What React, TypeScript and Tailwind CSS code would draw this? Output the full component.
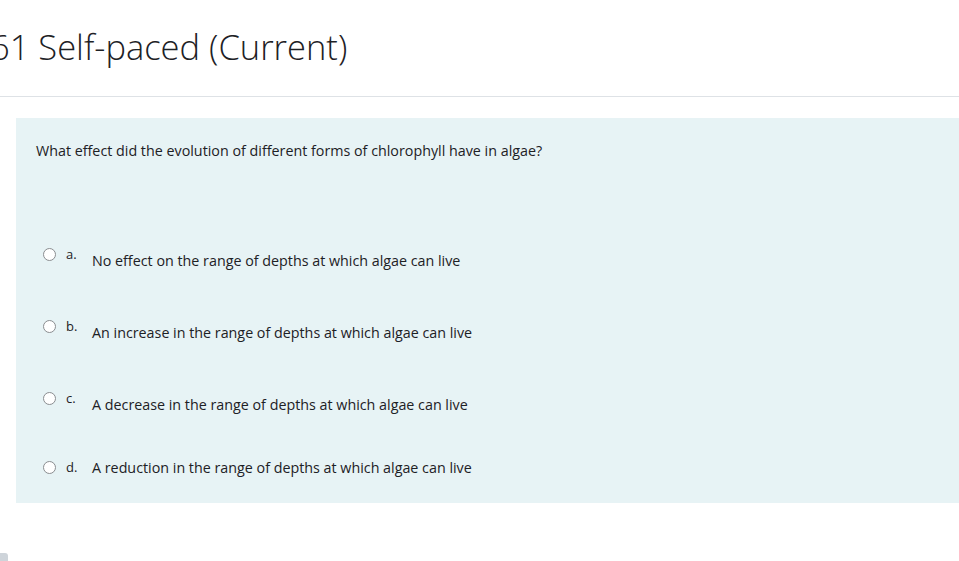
export default function App() {
    const options = [
        { letter: "a.", text: "No effect on the range of depths at which algae can live", drop: true },
        { letter: "b.", text: "An increase in the range of depths at which algae can live", drop: true },
        { letter: "c.", text: "A decrease in the range of depths at which algae can live", drop: true },
        { letter: "d.", text: "A reduction in the range of depths at which algae can live", drop: false },
    ];

    return (
        <div className="w-[959px] h-[561px] overflow-hidden bg-white text-[#1d2125]" style={{ fontFamily: '"Open Sans", "Noto Sans", sans-serif' }}>
            <div className="h-[97px] border-b border-b-[#dee2e6]">
                <h1 className="-ml-[10px] pt-[20px] text-[34.5px] leading-[54px] font-light whitespace-nowrap">
                    61 Self-paced (Current)
                </h1>
            </div>

            <div className="ml-4 mt-[21px] h-[385px] bg-[#e7f3f5] pl-5 pt-[22px]">
                <p className="text-[14.3px] leading-[21px]">
                    What effect did the evolution of different forms of chlorophyll have in algae?
                </p>

                <div className="mt-[85px] flex flex-col">
                    {options.map((o, i) => (
                        <div key={o.letter} className={"flex items-start " + (i === 0 ? "" : o.drop ? "mt-[47px]" : "mt-[44px]")}>
                            <span className="mt-[2px] ml-[7px] w-[13px] h-[13px] rounded-full border border-[#8a8d90] bg-white shrink-0"></span>
                            <span className="ml-[10px] w-[26px] text-[13px] leading-[16px]">{o.letter}</span>
                            <span className={"text-[14.3px] leading-[21px] " + (o.drop ? "mt-[4px]" : "-mt-[2px]")}>{o.text}</span>
                        </div>
                    ))}
                </div>
            </div>

            <div className="mt-[50px] w-[8px] h-[8px] rounded-tr-[3px] bg-[#ced4da]"></div>
        </div>
    );
}
